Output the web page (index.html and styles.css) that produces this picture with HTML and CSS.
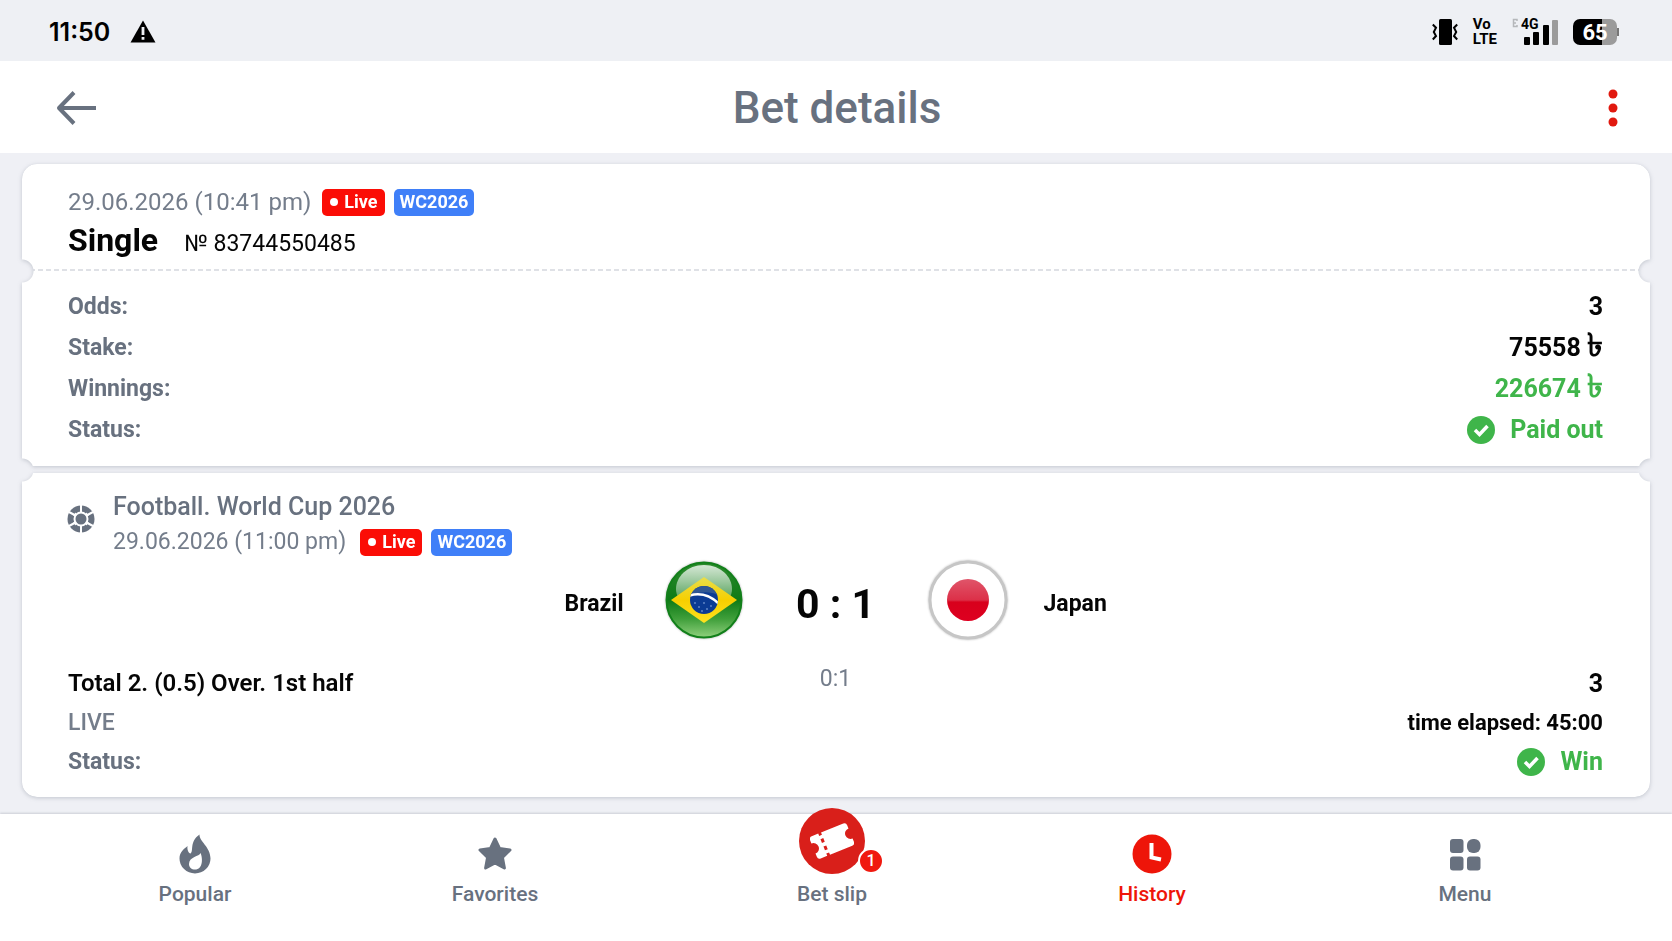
FILE: index.html
```html
<!DOCTYPE html>
<html lang="en">
<head>
    <meta charset="UTF-8">
    <meta name="viewport" content="width=device-width, initial-scale=1.0">
    <title>Bet details</title>
    <link rel="stylesheet" href="styles.css">
</head>
<body>
    <div class="status-bar">
        <div class="status-left">
            <span class="clock">11:50</span>
            <svg class="warning" viewBox="0 0 26 23" aria-hidden="true">
                <path d="M13 0.5 25.5 22.5H0.5z" fill="#000"/>
                <path d="M11.6 7h2.8v8h-2.8zM11.6 17h2.8v2.8h-2.8z" fill="#eef0f4"/>
            </svg>
        </div>
        <div class="status-right">
            <svg class="vibrate" viewBox="0 0 26 28" aria-hidden="true">
                <rect x="7" y="1" width="13" height="26" rx="1.5" fill="#000"/>
                <path d="M0.8 6.5 4 9.8 1.8 14 4 18 0.8 21.5M25.2 6.5 22 9.8 24.2 14 22 18 25.2 21.5" fill="none" stroke="#000" stroke-width="2"/>
            </svg>
            <span class="volte"><span>Vo</span><span>LTE</span></span>
            <div class="signal">
                <span class="signal-type">4G</span>
                <svg viewBox="0 0 46 28" aria-hidden="true">
                    <path d="M5 3V1.500H1.500v7H5V7M1.500 5H4" fill="none" stroke="#b5b7ba" stroke-width="1.500"/>
                    <rect x="12" y="19" width="6" height="8" rx="1" fill="#000"/>
                    <rect x="21" y="14" width="6" height="13" rx="1" fill="#000"/>
                    <rect x="31" y="7" width="6" height="20" rx="1" fill="#000"/>
                    <rect x="40" y="2" width="6" height="25" rx="1" fill="#9b9b9b"/>
                </svg>
            </div>
            <div class="battery">65</div>
        </div>
    </div>

    <header class="top-bar">
        <button class="icon-button" aria-label="Back">
            <svg class="back-icon" viewBox="0 0 40 36" aria-hidden="true">
                <path d="M18 2.500 3 18l15 15.500M3 18h37" fill="none" stroke="#68717f" stroke-width="4" stroke-linejoin="round"/>
            </svg>
        </button>
        <h1>Bet details</h1>
        <button class="icon-button" aria-label="More options">
            <svg class="more-icon" viewBox="0 0 10 38" aria-hidden="true">
                <circle cx="5" cy="5" r="4.500"/>
                <circle cx="5" cy="19" r="4.500"/>
                <circle cx="5" cy="33" r="4.500"/>
            </svg>
        </button>
    </header>

    <main>
        <article class="ticket">
            <div class="part ticket-head">
                <div class="line">
                    <span class="date">29.06.2026 (10:41 pm)</span>
                    <span class="tag live">Live</span>
                    <span class="tag cup">WC2026</span>
                </div>
                <div class="ticket-id">
                    <h2>Single</h2>
                    <span>№ 83744550485</span>
                </div>
            </div>
            <dl class="part ticket-body">
                <div class="row"><dt>Odds:</dt><dd>3</dd></div>
                <div class="row"><dt>Stake:</dt><dd>75558 <span class="taka">৳</span></dd></div>
                <div class="row"><dt>Winnings:</dt><dd class="green">226674 <span class="taka">৳</span></dd></div>
                <div class="row">
                    <dt>Status:</dt>
                    <dd class="green status">
                        <svg viewBox="0 0 28 28" aria-hidden="true"><circle cx="14" cy="14" r="14" fill="#3fb54a"/><path d="M8 14l4.500 4.500 8-8.500" fill="none" stroke="#fff" stroke-width="3.500"/></svg>
                        Paid out
                    </dd>
                </div>
            </dl>
        </article>

        <article class="ticket">
            <div class="part event">
                <div class="event-head">
                    <svg class="ball" viewBox="0 0 28 28" aria-hidden="true">
                        <circle cx="14" cy="14" r="13.500" fill="#68717f"/>
                        <g fill="none" stroke="#fff" stroke-width="2">
                            <circle cx="14" cy="14" r="6.500"/>
                            <path d="M14 0v8M14 20v8M8.500 10.500 2 7M19.500 10.500 26 7M8.500 17.500 2 21M19.500 17.500 26 21"/>
                        </g>
                        <path d="M8.500 7.500 6 11l4-1zM19.500 7.500 22 11l-4-1zM8.500 20.500 6 17l4 1zM19.500 20.500 22 17l-4 1z" fill="#fff"/>
                    </svg>
                    <div>
                        <h3>Football. World Cup 2026</h3>
                        <div class="line">
                            <span class="date">29.06.2026 (11:00 pm)</span>
                            <span class="tag live">Live</span>
                            <span class="tag cup">WC2026</span>
                        </div>
                    </div>
                </div>

                <div class="match">
                    <span class="team home">Brazil</span>
                    <svg class="flag" viewBox="0 0 80 80" role="img" aria-label="Flag of Brazil">
                        <defs>
                            <linearGradient id="brazil" x1="0" y1="0" x2="0" y2="1">
                                <stop offset="0" stop-color="#2c8a2c"/>
                                <stop offset="0.5" stop-color="#0e7a16"/>
                                <stop offset="0.75" stop-color="#3f9f3a"/>
                                <stop offset="1" stop-color="#8fd07c"/>
                            </linearGradient>
                            <linearGradient id="shine" x1="0" y1="0" x2="0" y2="1">
                                <stop offset="0" stop-color="#fff" stop-opacity="0.8"/>
                                <stop offset="1" stop-color="#fff" stop-opacity="0.3"/>
                            </linearGradient>
                            <linearGradient id="gold" x1="0" y1="0" x2="0" y2="1">
                                <stop offset="0" stop-color="#e8de4c"/>
                                <stop offset="0.5" stop-color="#f6cf00"/>
                                <stop offset="1" stop-color="#ffe21f"/>
                            </linearGradient>
                            <clipPath id="globe"><circle cx="40" cy="40" r="14"/></clipPath>
                        </defs>
                        <circle cx="40" cy="40" r="37.500" fill="url(#brazil)" stroke="#12801a" stroke-width="2"/>
                        <path d="M40 5c-17 0-28 12-28 24 0 3 1 7 3 10h50c2-3 3-7 3-10C68 17 57 5 40 5z" fill="url(#shine)"/>
                        <path d="M40 17 73 40 40 63 7 40z" fill="url(#gold)"/>
                        <circle cx="40" cy="40" r="14" fill="#0b3b94"/>
                        <g clip-path="url(#globe)">
                            <path d="M24 26h32v10c-8-5-20-5-32 0z" fill="#2f5793"/>
                            <path d="M24 36c12-4 23 0 31 8" fill="none" stroke="#fff" stroke-width="2.500"/>
                        </g>
                        <g fill="#9bb8e8">
                            <circle cx="31" cy="43" r="0.8"/><circle cx="35" cy="47" r="0.8"/><circle cx="40" cy="43" r="0.8"/>
                            <circle cx="43" cy="49" r="0.8"/><circle cx="47" cy="46" r="0.8"/><circle cx="38" cy="51" r="0.8"/>
                        </g>
                    </svg>
                    <strong class="score">0 : 1</strong>
                    <svg class="flag" viewBox="0 0 80 80" role="img" aria-label="Flag of Japan">
                        <defs>
                            <linearGradient id="sun" x1="0" y1="0" x2="0" y2="1">
                                <stop offset="0" stop-color="#e0556a"/>
                                <stop offset="0.5" stop-color="#dc3048"/>
                                <stop offset="0.55" stop-color="#d8001c"/>
                                <stop offset="1" stop-color="#de0020"/>
                            </linearGradient>
                        </defs>
                        <circle cx="40" cy="40" r="38" fill="#fff" stroke="#c6c6c6" stroke-width="3"/>
                        <circle cx="40" cy="40" r="21" fill="url(#sun)"/>
                    </svg>
                    <span class="team">Japan</span>
                </div>

                <div class="bet">
                    <strong class="pick">Total 2. (0.5) Over. 1st half</strong>
                    <span class="half-score">0:1</span>
                    <strong class="value odds">3</strong>
                </div>
                <div class="bet">
                    <span class="muted">LIVE</span>
                    <span></span>
                    <strong class="value elapsed">time elapsed: 45:00</strong>
                </div>
                <div class="bet">
                    <strong class="label">Status:</strong>
                    <span></span>
                    <strong class="value green status">
                        <svg viewBox="0 0 28 28" aria-hidden="true"><circle cx="14" cy="14" r="14" fill="#3fb54a"/><path d="M8 14l4.500 4.500 8-8.500" fill="none" stroke="#fff" stroke-width="3.500"/></svg>
                        Win
                    </strong>
                </div>
            </div>
        </article>
    </main>

    <nav class="bottom-nav">
        <a href="#popular">
            <svg viewBox="0 0 40 40" aria-hidden="true">
                <path d="M24.500 0.500C24 7 35.500 13 35.500 24.500A15.500 15 0 0 1 4.500 24.500C4.500 18 9 15 12.500 12c-.5 4 1 7 3 7.500C19 17 14 8 24.500 0.500z"/>
                <path d="M25.500 19c-1 3.500-11.500 3.500-11.500 11 0 3.500 2.500 5.500 6 5.500 8 0 8-11 5.500-16.500z" fill="#fff"/>
            </svg>
            Popular
        </a>
        <a href="#favorites">
            <svg viewBox="0 0 40 40" aria-hidden="true">
                <path d="M20 5l4.600 9.600 10.400 1.400-7.600 7.300 2 10.700L20 29l-9.400 5 2-10.700L5 16l10.400-1.400z" stroke="currentColor" stroke-width="3" stroke-linejoin="round"/>
            </svg>
            Favorites
        </a>
        <a href="#slip" class="slip">
            <span class="slip-circle">
                <svg viewBox="0 0 44 44" aria-hidden="true">
                    <g transform="rotate(-22 22 22)">
                        <path d="M5 10h7v2.500h3V10h24a3 3 0 0 1 3 3v3.500a5.500 5.500 0 0 0 0 11V31a3 3 0 0 1-3 3H15v-2.500h-3V34H5a3 3 0 0 1-3-3v-3.500a5.500 5.500 0 0 0 0-11V13a3 3 0 0 1 3-3z" fill="#fff"/>
                        <path d="M12 16h3v4h-3zM12 24h3v4h-3z" fill="#d91f1a"/>
                    </g>
                </svg>
                <span class="count">1</span>
            </span>
            Bet slip
        </a>
        <a href="#history" class="active">
            <svg viewBox="0 0 40 40" aria-hidden="true">
                <circle cx="20" cy="20" r="19.500"/>
                <path d="M19.500 9v14.500l9.500 2" fill="none" stroke="#fff" stroke-width="4"/>
            </svg>
            History
        </a>
        <a href="#menu">
            <svg viewBox="0 0 40 40" aria-hidden="true">
                <rect x="5" y="5" width="13.500" height="14" rx="3"/>
                <rect x="22" y="5" width="13.500" height="14" rx="6"/>
                <rect x="5" y="22.500" width="13.500" height="14" rx="3"/>
                <rect x="22" y="22.500" width="13.500" height="14" rx="3"/>
            </svg>
            Menu
        </a>
    </nav>
</body>
</html>
```
FILE: styles.css
```css
* {
    box-sizing: border-box;
}

body {
    margin: 0;
    min-height: 100vh;
    display: flex;
    flex-direction: column;
    background-color: #eff0f5;
    color: #050505;
    font-family: Roboto, "Liberation Sans", sans-serif;
    font-size: 24px;
    line-height: 32px;
}

h1, h2, h3, dl, dd {
    margin: 0;
}

/* phone status bar */
.status-bar {
    display: flex;
    justify-content: space-between;
    align-items: center;
    height: 61px;
    padding: 2px 55px 0 49px;
    background-color: #eef0f4;
    color: #000;
}

.status-left,
.status-right {
    display: flex;
    align-items: center;
}

.status-left {
    gap: 20px;
}

.status-right {
    gap: 15px;
}

.clock {
    font-family: Inter, Roboto, sans-serif;
    font-size: 25px;
    font-weight: 600;
}

.warning {
    width: 26px;
    height: 23px;
}

.vibrate {
    width: 26px;
    height: 28px;
}

.volte {
    display: flex;
    flex-direction: column;
    font-size: 15px;
    font-weight: 700;
    line-height: 15px;
}

.signal {
    position: relative;
    height: 28px;
}

.signal svg {
    display: block;
    width: 46px;
    height: 28px;
}

.signal-type {
    position: absolute;
    top: 0;
    left: 9px;
    font-size: 14px;
    font-weight: 700;
    line-height: 12px;
}

.battery {
    position: relative;
    width: 44px;
    height: 26px;
    border-radius: 7px;
    background: linear-gradient(to right, #000 65%, #9b9b9b 65%);
    color: #fff;
    font-size: 22px;
    font-weight: 700;
    line-height: 27px;
    text-align: center;
}

.battery::after {
    content: "";
    position: absolute;
    top: 9px;
    right: -2px;
    width: 2px;
    height: 8px;
    background-color: #777;
}

/* page header */
.top-bar {
    display: flex;
    justify-content: space-between;
    align-items: center;
    height: 92px;
    padding: 2px 54px 0 56px;
    background-color: #fff;
}

.top-bar h1 {
    color: #68717f;
    font-size: 44px;
    font-weight: 500;
    line-height: 52px;
}

.icon-button {
    display: flex;
    width: 40px;
    padding: 0;
    border: 0;
    background: none;
    cursor: pointer;
}

.icon-button:last-child {
    justify-content: flex-end;
}

.back-icon {
    width: 40px;
    height: 36px;
}

.more-icon {
    width: 10px;
    height: 38px;
    fill: #e1190f;
}

/* tickets */
main {
    flex: 1;
    display: flex;
    flex-direction: column;
    gap: 7px;
    padding: 11px 22px 17px;
}

.ticket {
    filter: drop-shadow(0 1px 2px rgba(60, 70, 90, 0.25));
}

.part {
    padding: 0 47px 0 46px;
    background-color: #fff;
}

.ticket-head {
    height: 107px;
    padding-top: 22px;
    border-radius: 15px 15px 0 0;
    background-image: linear-gradient(to right, #dfe1e6 60%, transparent 60%);
    background-position: 0 100%;
    background-size: 8px 2px;
    background-repeat: repeat-x;
    mask-image: radial-gradient(circle at 0 100%, transparent 11px, #000 12px),
                radial-gradient(circle at 100% 100%, transparent 11px, #000 12px);
    mask-composite: intersect;
}

.ticket-body {
    padding-top: 15px;
    padding-bottom: 16px;
    mask-image: radial-gradient(circle at 0 0, transparent 11px, #000 12px),
                radial-gradient(circle at 100% 0, transparent 11px, #000 12px),
                radial-gradient(circle at 0 calc(100% + 4px), transparent 11px, #000 12px),
                radial-gradient(circle at 100% calc(100% + 4px), transparent 11px, #000 12px);
    mask-composite: intersect;
}

.event {
    padding-top: 17px;
    padding-bottom: 16px;
    border-radius: 0 0 15px 15px;
    mask-image: radial-gradient(circle at 0 -3px, transparent 11px, #000 12px),
                radial-gradient(circle at 100% -3px, transparent 11px, #000 12px);
    mask-composite: intersect;
}

.line {
    display: flex;
    align-items: center;
}

.date {
    margin-right: 11px;
    color: #747d8b;
}

.tag {
    display: flex;
    align-items: center;
    height: 27px;
    padding: 0 6px;
    border-radius: 5px;
    color: #fff;
    font-size: 18px;
    font-weight: 700;
}

.live {
    gap: 6px;
    margin-right: 9px;
    padding: 0 7px 0 8px;
    background-color: #fb0d06;
}

.live::before {
    content: "";
    width: 8px;
    height: 8px;
    border-radius: 50%;
    background-color: #fff;
}

.cup {
    background-color: #3f7ff8;
}

.ticket-id {
    display: flex;
    align-items: baseline;
    gap: 26px;
    padding-top: 4px;
    font-size: 23px;
}

.ticket-id h2 {
    font-size: 32px;
    font-weight: 700;
    line-height: 36px;
}

.row {
    display: flex;
    justify-content: space-between;
    line-height: 41px;
}

.row dt,
.label {
    color: #68717f;
    font-size: 23px;
    font-weight: 700;
}

.row dd {
    font-size: 25px;
    font-weight: 700;
}

.taka {
    font-size: 32px;
    line-height: 24px;
}

.green {
    color: #3fb54a;
}

.status {
    display: flex;
    align-items: center;
    gap: 15px;
}

.status svg {
    width: 28px;
    height: 28px;
}

.event-head {
    display: flex;
    gap: 18px;
}

.event-head .line {
    height: 36px;
}

.event-head .date {
    margin-right: 14px;
    font-size: 23px;
}

.ball {
    width: 28px;
    height: 28px;
    margin: 15px 0 0 -1px;
}

.event-head h3 {
    color: #68717f;
    font-size: 25px;
    font-weight: 500;
    line-height: 34px;
}

.match {
    display: grid;
    grid-template-columns: 1fr 80px 184px 80px 1fr;
    align-items: center;
}

.flag {
    width: 80px;
    height: 80px;
    filter: drop-shadow(0 0 1px rgba(0, 0, 0, 0.3));
}

.team {
    padding: 8px 36px 0;
    font-size: 23px;
    font-weight: 700;
}

.home {
    padding-right: 40px;
    text-align: right;
}

.score {
    padding-top: 8px;
    font-size: 41px;
    font-weight: 700;
    line-height: 48px;
    text-align: center;
}

.bet {
    display: grid;
    grid-template-columns: 1fr auto 1fr;
    font-size: 23px;
    line-height: 39px;
}

.match + .bet {
    margin-top: 24px;
}

.bet strong {
    font-weight: 700;
}

.bet .pick {
    font-size: 24px;
    font-weight: 600;
}

.bet .elapsed {
    font-size: 22px;
}

.muted {
    color: #747d8b;
    font-weight: 500;
}

.half-score {
    color: #747d8b;
    line-height: 30px;
}

.value {
    justify-self: end;
}

.odds,
.value.green {
    font-size: 25px;
}

/* bottom navigation */
.bottom-nav {
    display: grid;
    grid-template-columns: 310fr 290fr 384fr 256fr 370fr;
    height: 127px;
    padding: 0 22px 0 40px;
    background-color: #fff;
    box-shadow: 0 -1px 2px rgba(60, 70, 90, 0.2);
}

.bottom-nav a {
    display: flex;
    flex-direction: column;
    align-items: center;
    gap: 6px;
    padding-top: 20px;
    color: #68717f;
    font-size: 21px;
    font-weight: 500;
    line-height: 28px;
    text-decoration: none;
}

.bottom-nav a > svg {
    width: 40px;
    height: 40px;
    fill: currentColor;
}

.bottom-nav .active {
    color: #ee1509;
}

.slip-circle {
    position: relative;
    display: flex;
    align-items: center;
    justify-content: center;
    width: 66px;
    height: 66px;
    margin-top: -26px;
    border-radius: 50%;
    background-color: #d91f1a;
}

.slip-circle svg {
    width: 44px;
    height: 44px;
}

.count {
    position: absolute;
    right: -19px;
    bottom: 0;
    width: 26px;
    height: 26px;
    border: 2px solid #fff;
    border-radius: 50%;
    background-color: #f0190f;
    color: #fff;
    font-size: 16px;
    line-height: 22px;
    text-align: center;
}
```
